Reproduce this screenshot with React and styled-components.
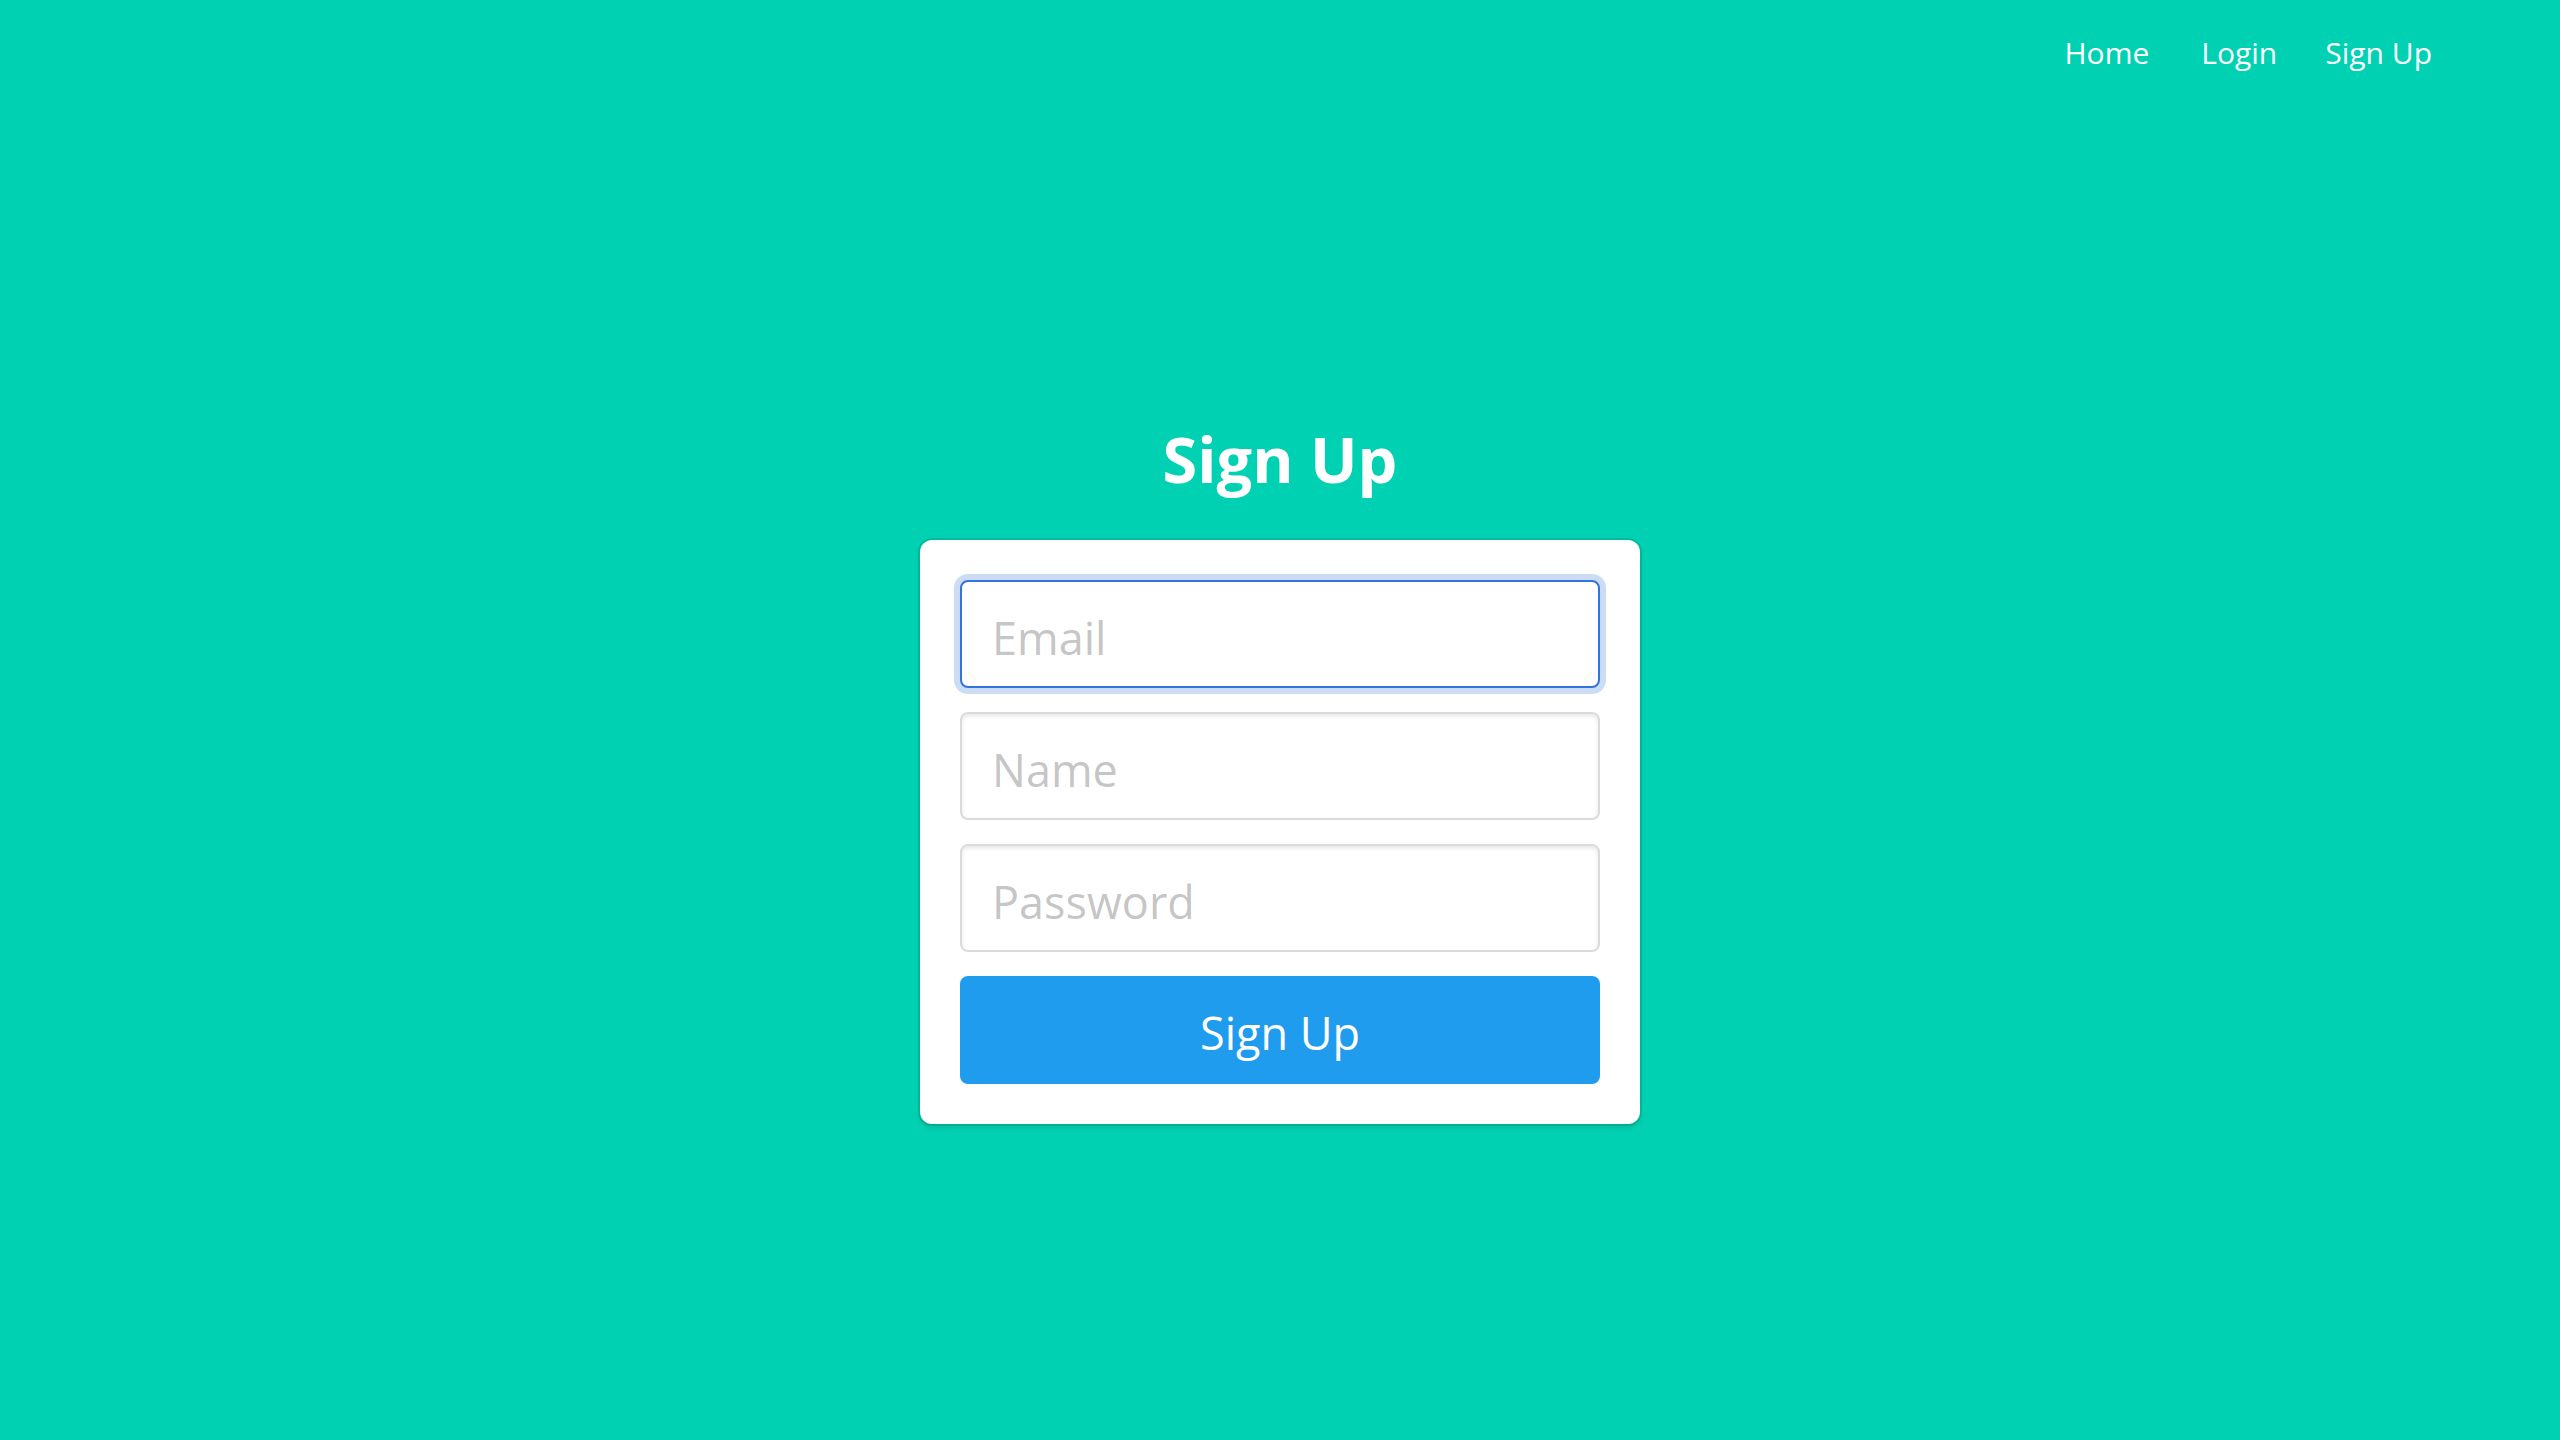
import React from "react";
import styled, { createGlobalStyle, css } from "styled-components";

const GlobalStyle = createGlobalStyle`
  html, body {
    margin: 0;
    padding: 0;
    background: #00d1b2;
    font-family: "Open Sans", "Noto Sans", sans-serif;
  }
  * { box-sizing: border-box; }
`;

const fields = [
  { name: "email", type: "email", placeholder: "Email", focused: true },
  { name: "name", type: "text", placeholder: "Name" },
  { name: "password", type: "password", placeholder: "Password" },
];

const App = () => {
  return (
    <>
      <GlobalStyle />
      <Hero>
        <NavBar>
          <NavItem href="#">Home</NavItem>
          <NavItem href="#">Login</NavItem>
          <NavItem href="#">Sign Up</NavItem>
        </NavBar>
        <HeroBody>
          <Column>
            <Title>Sign Up</Title>
            <Box>
              {fields.map((f) => (
                <Field key={f.name}>
                  <Input type={f.type} name={f.name} placeholder={f.placeholder} focused={f.focused} />
                </Field>
              ))}
              <SubmitBtn type="button">Sign Up</SubmitBtn>
            </Box>
          </Column>
        </HeroBody>
      </Hero>
    </>
  );
};

export default App;

const Hero = styled.div`
  min-height: 100vh;
  display: flex;
  flex-direction: column;
  background: #00d1b2;
`;
const NavBar = styled.nav`
  height: 104px;
  display: flex;
  align-items: center;
  justify-content: flex-end;
  padding-right: 104px;
`;
const NavItem = styled.a`
  color: #ffffff;
  text-decoration: none;
  font-size: 30px;
  line-height: 1.5;
  padding: 16px 24px;
  &:first-child {
    padding-right: 28px;
  }
`;
const HeroBody = styled.div`
  flex: 1;
  display: flex;
  align-items: center;
  justify-content: center;
`;
const Column = styled.div`
  width: 720px;
  text-align: center;
`;
const Title = styled.h3`
  margin: 0 0 48px;
  padding-top: 5px;
  color: #ffffff;
  font-size: 63px;
  font-weight: 700;
  line-height: 67px;
`;
const Box = styled.div`
  background: #ffffff;
  border-radius: 12px;
  padding: 40px;
  box-shadow: 0 4px 6px rgba(10, 10, 10, 0.1), 0 0 0 2px rgba(10, 10, 10, 0.1);
`;
const Field = styled.div`
  margin-bottom: 24px;
`;
const Input = styled.input`
  display: block;
  width: 100%;
  height: 108px;
  padding: 6px 30px 0;
  font-family: inherit;
  font-size: 45px;
  color: #363636;
  background: #ffffff;
  border: 2px solid #dbdbdb;
  border-radius: 8px;
  box-shadow: inset 0 2px 4px rgba(10, 10, 10, 0.1);
  outline: none;
  &::placeholder {
    color: rgba(54, 54, 54, 0.3);
  }
  ${({ focused }) =>
    focused &&
    css`
      border-color: #3273dc;
      box-shadow: 0 0 0 6px rgba(50, 115, 220, 0.25);
    `}
`;
const SubmitBtn = styled.button`
  display: block;
  width: 100%;
  height: 108px;
  padding: 4px 0 0;
  border: none;
  border-radius: 8px;
  background: #209cee;
  color: #ffffff;
  font-family: inherit;
  font-size: 45px;
  cursor: pointer;
`;
